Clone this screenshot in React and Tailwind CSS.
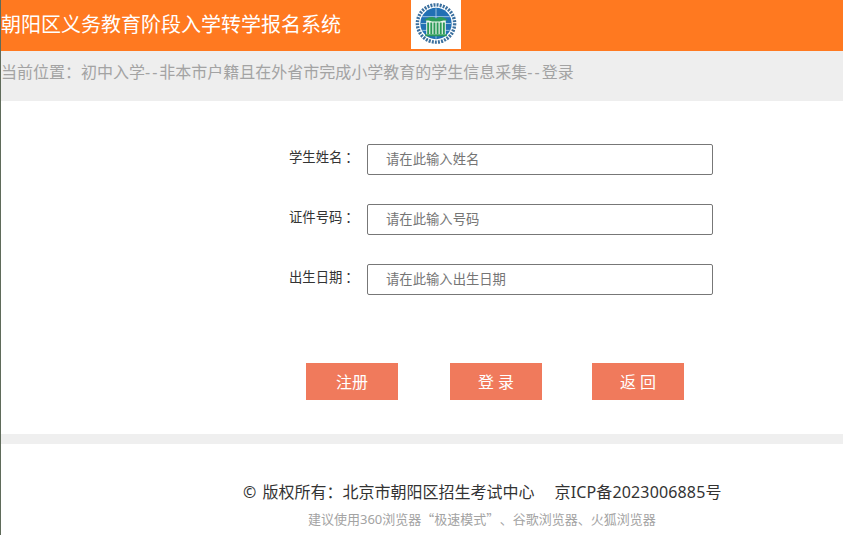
import React from 'react';

const FONT = "font-['Noto_Sans','Noto_Sans_CJK_SC',sans-serif]";

const Logo = () => (
  <svg viewBox="0 0 50 50" className="w-[50px] h-[49px]">
    <circle cx="25" cy="24" r="19" fill="none" stroke="#3a6f9e" strokeWidth="3.500" strokeDasharray="2 1.200" />
    <circle cx="25" cy="24" r="16" fill="#2270b4" />
    <path d="M11 17h28M9.500 24h31M11 31h28M25 8.500v31" stroke="#bcd8ec" strokeWidth="0.800" />
    <rect x="15" y="20" width="20" height="16" fill="#eef6ee" />
    <path d="M13 21c3-4 9-5 12-2 3-3 9-2 12 2-3 0-6 0-8 1h-8c-2-1-5-1-8-1z" fill="#2c9a58" />
    <path d="M17 23v12M20.200 23v12M23.400 23v12M26.600 23v12M29.800 23v12M33 23v12" stroke="#2c9a58" strokeWidth="2" />
    <rect x="14" y="35" width="22" height="2" fill="#2c9a58" />
  </svg>
);

const Field = ({ label, placeholder }) => (
  <div className="flex items-center h-[31px] mb-[29px]">
    <label className="w-[78px] ml-[288px] text-[13.33px] text-[#333] -mt-[3px]">
      {label}<span className="ml-[3px]">：</span>
    </label>
    <input
      placeholder={placeholder}
      className="w-[346px] h-[31px] border border-[#777] rounded-[2px] pl-[18px] pb-[2px] text-[13.33px] outline-none placeholder:text-[#757575]"
    />
  </div>
);

const App = () => {
  return (
    <div className={`${FONT} min-h-[535px] bg-white border-l border-[#5f6b5a] overflow-hidden`}>
      <div className="h-[51px] bg-[#ff7920] flex items-start">
        <h1 className="w-[410px] text-[20px] leading-[50px] text-white">朝阳区义务教育阶段入学转学报名系统</h1>
        <div className="w-[50px] h-[49px] bg-white">
          <Logo />
        </div>
      </div>
      <div className="h-[50px] bg-[#eeeeee] text-[16px] leading-[42px] text-[#a3a3a3] whitespace-nowrap">
        当前位置：初中入学<span className="tracking-[2px]">--</span>非本市户籍且在外省市完成小学教育的学生信息采集<span className="tracking-[2px]">--</span>登录
      </div>

      <div className="pt-[43px]">
        <Field label="学生姓名" placeholder="请在此输入姓名" />
        <Field label="证件号码" placeholder="请在此输入号码" />
        <Field label="出生日期" placeholder="请在此输入出生日期" />
      </div>

      <div className="flex ml-[305px] mt-[68px] mb-[34px] text-[16px] text-white">
        <button className="w-[92px] h-[37px] bg-[#f07a5c]">注册</button>
        <button className="w-[92px] h-[37px] bg-[#f07a5c] ml-[52px]">登 录</button>
        <button className="w-[92px] h-[37px] bg-[#f07a5c] ml-[50px]">返 回</button>
      </div>

      <div className="h-[10px] bg-[#efefef]" />

      <div className="ml-[242px] pt-[38px] text-[16px] leading-[21px] text-[#333] whitespace-nowrap">
        <span className="mr-[2px]">©</span> 版权所有：北京市朝阳区招生考试中心
        <span className="ml-[20px] tracking-[0.15px]">京ICP备2023006885号</span>
      </div>
      <div className="ml-[307px] mt-[7px] text-[13px] leading-[18px] text-[#a3a3a3] whitespace-nowrap">
        建议使用360浏览器<span className="font-['Noto_Sans_CJK_SC']">“极速模式”<span className="ml-[7px]">、</span></span>谷歌浏览器、火狐浏览器
      </div>
    </div>
  );
};

export default App;
